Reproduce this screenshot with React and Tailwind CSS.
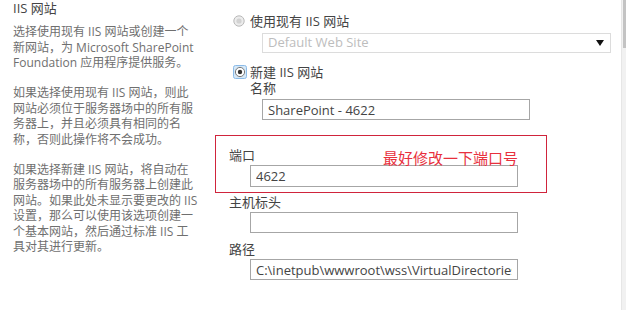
const font = "font-['Open_Sans','Noto_Sans_CJK_SC',sans-serif]";

const RadioOff = () => (
  <svg width="12" height="12" viewBox="0 0 12 12" className="shrink-0">
    <circle cx="6" cy="6" r="5.2" fill="#ececec" stroke="#b9b9b9" />
    <circle cx="6" cy="6" r="2.6" fill="#d2d2d2" />
  </svg>
);

const RadioOn = () => (
  <svg width="14" height="14" viewBox="0 0 14 14" className="shrink-0">
    <rect x="0.5" y="0.5" width="13" height="13" rx="2" fill="#d5e8f8" stroke="#8bbbe8" />
    <circle cx="7" cy="7" r="4.6" fill="#ffffff" stroke="#7a7a7a" />
    <circle cx="7" cy="7" r="2.2" fill="#333333" />
  </svg>
);

const Field = ({ value, className }) => (
  <input
    readOnly
    value={value}
    className={`block h-[21px] w-[268px] border border-[#a6a6a6] bg-white px-[5px] text-[13px] text-[#444] outline-none ${className}`}
  />
);

export default function App() {
  return (
    <div className={`flex h-[310px] w-[626px] overflow-hidden bg-white ${font}`}>
      {/* 左侧说明 */}
      <div className="w-[215px] shrink-0 pl-[13px] pr-[14px] text-[#6f6f6f]">
        <h2 className="text-[13px] leading-[16px] text-[#444]">IIS 网站</h2>
        <div className="mt-[8px] text-[12px] leading-[15.5px]">
          <p>
            选择使用现有 IIS 网站或创建一个
            <br />
            新网站，为 Microsoft SharePoint
            <br />
            Foundation 应用程序提供服务。
          </p>
          <p className="mt-[14.5px]">
            如果选择使用现有 IIS 网站，则此
            <br />
            网站必须位于服务器场中的所有服
            <br />
            务器上，并且必须具有相同的名
            <br />
            称，否则此操作将不会成功。
          </p>
          <p className="mt-[14.5px]">
            如果选择新建 IIS 网站，将自动在
            <br />
            服务器场中的所有服务器上创建此
            <br />
            网站。如果此处未显示要更改的 IIS
            <br />
            设置，那么可以使用该选项创建一
            <br />
            个基本网站，然后通过标准 IIS 工
            <br />
            具对其进行更新。
          </p>
        </div>
      </div>

      {/* 右侧表单 */}
      <div className="flex-1 pt-[13px] text-[13px] text-[#444]">
        <div className="ml-[18px] flex h-[16px] items-center gap-[5px] leading-[16px]">
          <RadioOff />
          <span>使用现有 IIS 网站</span>
        </div>
        <div className="ml-[47px] mt-[4px] flex h-[20px] w-[349px] items-center justify-between border border-[#dcdcdc] pl-[5px] pr-[6px] text-[#bdbdbd]">
          <span>Default Web Site</span>
          <svg width="8" height="6" viewBox="0 0 8 6">
            <path d="M0 0 H8 L4 6 Z" fill="#111" />
          </svg>
        </div>

        <div className="ml-[18px] mt-[11px] flex h-[16px] items-center gap-[3px] leading-[16px]">
          <RadioOn />
          <span>新建 IIS 网站</span>
        </div>
        <div className="ml-[35px] h-[16px] leading-[16px]">名称</div>
        <Field value="SharePoint - 4622" className="ml-[47px] mt-[3px] w-[267px]" />

        <div className="mt-[15px] h-[58px] w-[332px] border border-[#d0243c]">
          <div className="mt-[11px] flex h-[18px] items-start pl-[13px]">
            <span className="w-[154px] leading-[16px]">端口</span>
            <span className="mt-[2px] text-[15px] leading-[18px] text-[#e8303d]">最好修改一下端口号</span>
          </div>
          <Field value="4622" className="ml-[34px] h-[22px]" />
        </div>

        <div className="ml-[14px] mt-[1px] h-[16px] leading-[16px]">主机标头</div>
        <Field value="" className="ml-[35px] mt-[2px]" />

        <div className="ml-[14px] mt-[8px] h-[16px] leading-[16px]">路径</div>
        <Field value="C:\inetpub\wwwroot\wss\VirtualDirectories\4622" className="ml-[35px] mt-[2px]" />
      </div>

      {/* 滚动条 */}
      <div className="w-[5px] shrink-0 border-l border-[#e6e6e6] bg-[#f1f1f1]">
        <div className="ml-[1px] h-[48px] bg-[#c3c3c3]" />
      </div>
    </div>
  );
}
